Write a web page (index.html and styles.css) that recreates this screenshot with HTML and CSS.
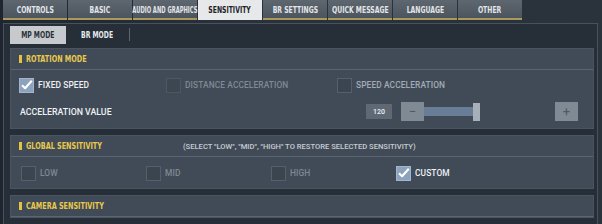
FILE: index.html
```html
<!DOCTYPE html>
<html>
<head>
<meta charset="utf-8">
<link rel="stylesheet" href="styles.css">
</head>
<body>
<div class="screen">
  <nav class="tabs">
    <div class="tab"><span class="cond">CONTROLS</span></div>
    <div class="tab"><span class="cond">BASIC</span></div>
    <div class="tab"><span class="cond tight">AUDIO AND GRAPHICS</span></div>
    <div class="tab active"><span class="cond">SENSITIVITY</span></div>
    <div class="tab"><span class="cond">BR SETTINGS</span></div>
    <div class="tab"><span class="cond">QUICK MESSAGE</span></div>
    <div class="tab"><span class="cond">LANGUAGE</span></div>
    <div class="tab"><span class="cond">OTHER</span></div>
  </nav>
  <div class="frame">
    <div class="subbar">
      <div class="mode active"><span class="cond">MP MODE</span></div>
      <div class="mode"><span class="cond">BR MODE</span></div>
      <div class="sep"></div>
    </div>
    <div class="panels">
      <section class="panel">
        <header class="phead"><span class="mark"></span><span class="ptitle">ROTATION MODE</span></header>
        <div class="pbody">
          <div class="optrow cols3">
            <label class="opt"><span class="box checked"><svg viewBox="0 0 16 16"><path d="M2.5 8.2 L6.3 12 L14.5 2.8" fill="none" stroke="#ffffff" stroke-width="2.6" stroke-linejoin="round"/></svg></span><span class="otext on">FIXED SPEED</span></label>
            <label class="opt"><span class="box dim"></span><span class="otext off">DISTANCE ACCELERATION</span></label>
            <label class="opt"><span class="box"></span><span class="otext mid">SPEED ACCELERATION</span></label>
          </div>
          <div class="accrow">
            <span class="acclabel">ACCELERATION VALUE</span>
            <span class="value">120</span>
            <span class="btn minus">&#8722;</span>
            <div class="track"><div class="fill" style="width:49px"></div><div class="thumb"></div></div>
            <span class="btn plus">+</span>
          </div>
        </div>
      </section>
      <section class="panel">
        <header class="phead"><span class="mark"></span><span class="ptitle wide">GLOBAL SENSITIVITY</span><span class="hint">(SELECT "LOW", "MID", "HIGH" TO RESTORE SELECTED SENSITIVITY)</span></header>
        <div class="pbody short">
          <div class="optrow cols4">
            <label class="opt"><span class="box"></span><span class="otext off">LOW</span></label>
            <label class="opt"><span class="box"></span><span class="otext off">MID</span></label>
            <label class="opt"><span class="box"></span><span class="otext off">HIGH</span></label>
            <label class="opt"><span class="box checked"><svg viewBox="0 0 16 16"><path d="M2.5 8.2 L6.3 12 L14.5 2.8" fill="none" stroke="#ffffff" stroke-width="2.6" stroke-linejoin="round"/></svg></span><span class="otext on">CUSTOM</span></label>
          </div>
        </div>
      </section>
      <section class="panel">
        <header class="phead"><span class="mark"></span><span class="ptitle">CAMERA SENSITIVITY</span></header>
      </section>
    </div>
  </div>
</div>
</body>
</html>
```
FILE: styles.css
```css
* { box-sizing: border-box; }
html, body { margin: 0; padding: 0; }
body {
  width: 602px;
  height: 224px;
  overflow: hidden;
  background: linear-gradient(90deg, #1f262f 0%, #29313b 40%, #2a323c 100%);
  font-family: Roboto, "Liberation Sans", sans-serif;
}
.screen { width: 602px; height: 224px; }

.cond {
  display: inline-block;
  transform: scaleX(0.8);
  white-space: nowrap;
  flex-shrink: 0;
}
.cond.tight { transform: scaleX(0.68); }

.tabs {
  display: flex;
  gap: 1px;
  padding-left: 3px;
  height: 20px;
}
.tab {
  width: 64px;
  height: 20px;
  display: flex;
  align-items: center;
  justify-content: center;
  background: linear-gradient(180deg, #5e666f 0%, #4c545e 100%);
  border-bottom: 2px solid #a9995c;
  color: #e2e6ea;
  font-family: "DejaVu Sans Condensed", "Liberation Sans Narrow", sans-serif;
  font-weight: bold;
  font-size: 8.5px;
  padding-top: 1px;
  white-space: nowrap;
}
.tab.active {
  background: #e6e8ea;
  color: #1d2228;
  border-bottom-color: #e6e8ea;
}

.frame {
  margin: 3px 4px 0 3px;
  border: 1px solid #48515d;
  border-bottom: none;
  background: #262e38;
  height: 201px;
}
.subbar {
  display: flex;
  align-items: center;
  height: 21px;
  padding-left: 6px;
}
.mode {
  width: 56px;
  height: 18px;
  display: flex;
  align-items: center;
  justify-content: center;
  color: #e6eaee;
  font-family: "DejaVu Sans Condensed", "Liberation Sans Narrow", sans-serif;
  font-weight: bold;
  font-size: 8.5px;
}
.mode.active {
  background: #c6cace;
  color: #2a3038;
}
.mode + .mode { margin-left: 4px; width: 54px; }
.sep {
  width: 1px;
  height: 13px;
  background: #5d6672;
  margin-left: 5px;
}

.panels {
  display: flex;
  flex-direction: column;
  gap: 6px;
  padding: 3px 3px 0 6px;
}
.panel {
  background: #414b57;
  border: 1px solid #4b5561;
}
.phead {
  display: flex;
  align-items: center;
  height: 21px;
  padding-left: 8px;
  border-bottom: 1px solid #5a6571;
}
.mark {
  width: 3px;
  height: 8px;
  background: #e5c340;
  margin-right: 4px;
}
.ptitle {
  color: #e9c94c;
  font-family: "DejaVu Sans Condensed", "Liberation Sans Narrow", sans-serif;
  font-weight: bold;
  font-size: 9px;
  display: inline-block;
  transform: scaleX(0.8);
  transform-origin: left center;
  white-space: nowrap;
}
.hint {
  margin-left: 62px;
  color: #c6ccd3;
  font-size: 7.6px;
  font-weight: 500;
  white-space: nowrap;
}
.pbody {
  padding: 7px 0 7px 0;
}
.pbody.short { padding: 8px 0 7px 0; }

.optrow {
  display: grid;
  height: 16px;
  padding-left: 8px;
}
.cols3 { grid-template-columns: 147px 171px 171px; }
.cols4 { grid-template-columns: 125px 125px 125px 125px; padding-left: 10px; }
.opt {
  display: flex;
  align-items: center;
  gap: 4px;
}
.box {
  width: 15px;
  height: 15px;
  background: #3b4550;
  border: 1px solid #56606c;
  display: flex;
  align-items: center;
  justify-content: center;
}
.box.dim { border-color: #4d5763; background: #3d4752; }
.box.checked {
  background: #8da2bd;
  border-color: #a5b6cc;
}
.box svg { width: 14px; height: 14px; }
.otext {
  font-size: 8.4px;
  font-weight: 500;
  letter-spacing: 0.1px;
}
.otext.on { color: #eef1f4; }
.otext.off { color: #7f8994; }
.otext.mid { color: #a2abb5; }

.accrow {
  display: flex;
  align-items: center;
  height: 19px;
  margin-top: 9px;
  padding-left: 9px;
}
.acclabel {
  color: #eef1f4;
  font-size: 8.8px;
  font-weight: 500;
  width: 346px;
}
.value {
  width: 26px;
  height: 15px;
  background: #5f6975;
  color: #eef1f4;
  font-size: 7px;
  font-weight: 500;
  display: flex;
  align-items: center;
  justify-content: center;
}
.btn {
  width: 23px;
  height: 19px;
  background: #808a95;
  color: #4f5964;
  display: flex;
  align-items: center;
  justify-content: center;
  font-size: 13px;
  line-height: 1;
}
.minus { margin-left: 9px; }
.track {
  width: 131px;
  height: 19px;
  display: flex;
  align-items: center;
}
.fill {
  height: 9px;
  background: #6a7d96;
}
.thumb {
  width: 7px;
  height: 18px;
  background: #a7afb8;
}
.plus { color: #4f5964; }
```
